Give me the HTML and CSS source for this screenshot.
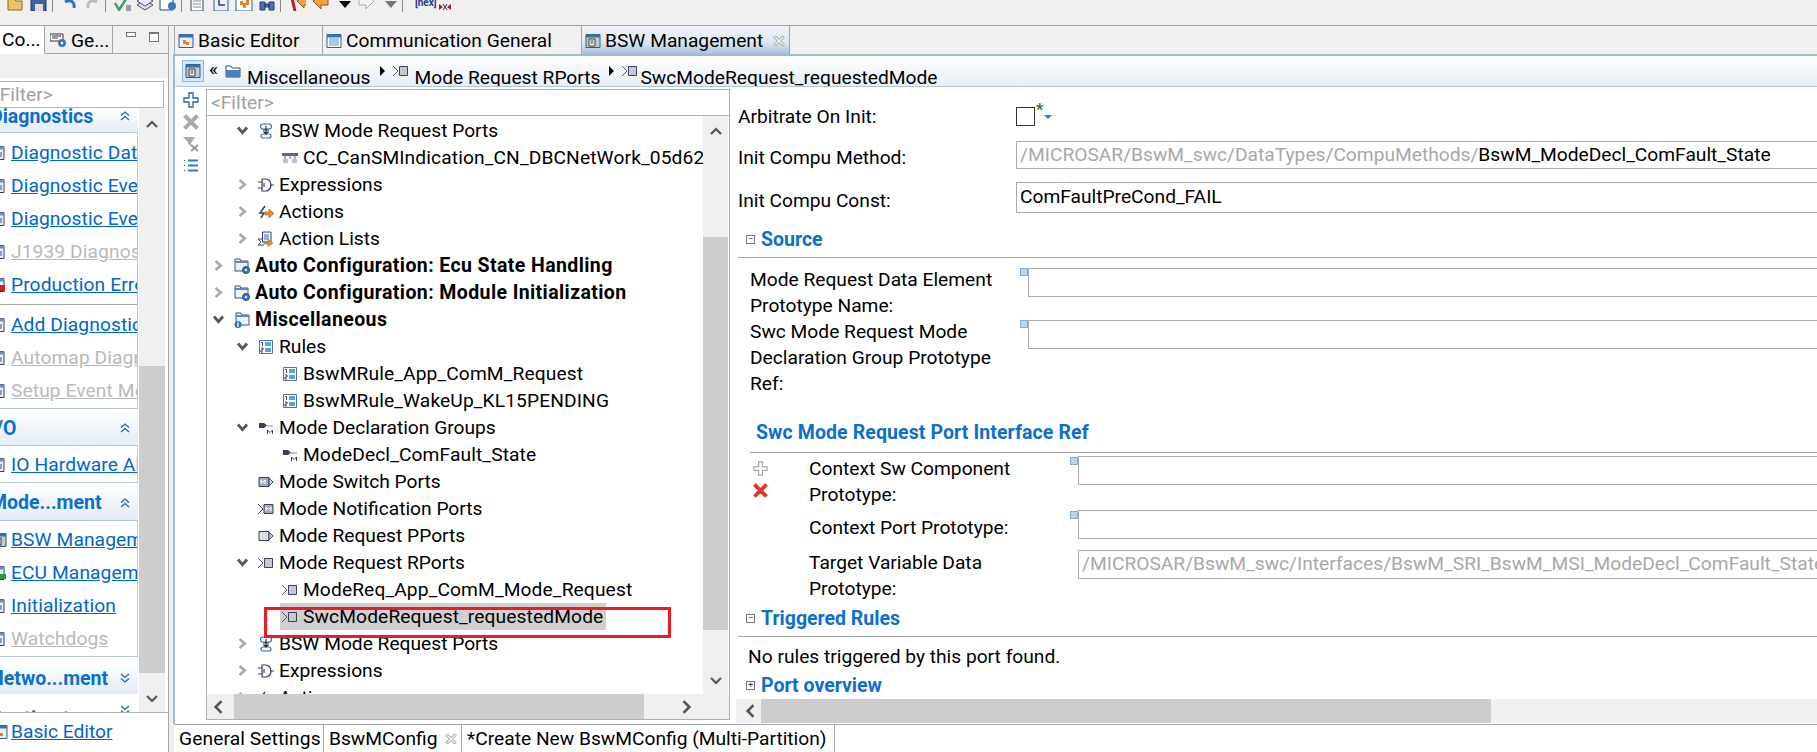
FILE: index.html
```html
<!DOCTYPE html>
<html lang="en">
<head>
  <meta charset="UTF-8" />
  <title>BSW Management</title>
  <link rel="stylesheet" href="styles.css">
</head>
<body>
  <svg class="defs" width="0" height="0">
    <symbol id="i-port" viewBox="0 0 16 16"><path d="M5 1h6a2 2 0 0 1 0 5H5a2 2 0 0 1 0-5zM5 11h6a2 2 0 0 1 0 4H5a2 2 0 0 1 0-4z" fill="#fff" stroke="#3d6ea8" stroke-width="1.2"/><path d="M8 3v8M5.500 8.500 8 11l2.500-2.500M5 7h6" fill="none" stroke="#223" stroke-width="1.100"/></symbol>
    <symbol id="i-cc" viewBox="0 0 16 16"><path d="M0 3h16v3H0z" fill="#5a6a86"/><path d="M3 6v3M13 6v3M8 6v3" stroke="#5a6a86" stroke-width="1"/><path d="M1 9h5v4H1zM10 9h5v4h-5z" fill="#b9c2d2"/></symbol>
    <symbol id="i-expr" viewBox="0 0 16 16"><path d="M4 2h4a5 6 0 0 1 0 12H4z" fill="#fff" stroke="#3b3b66" stroke-width="1.200"/><path d="M0 5h4M0 11h4M12 8h4M6 6v4" stroke="#3b3b66" stroke-width="1.200"/></symbol>
    <symbol id="i-action" viewBox="0 0 16 16"><path d="M7 2 2 9h4l-3 5" fill="none" stroke="#35406e" stroke-width="1.500"/><path d="M7 8h4V5l5 4.500L11 14v-3H7z" fill="#e8912b" stroke="#9b5a10" stroke-width=".6"/></symbol>
    <symbol id="i-list" viewBox="0 0 16 16"><path d="M4.500 1H13v10H4.500z" fill="#eef3fb" stroke="#33406e"/><path d="M6 4h5M6 6h5M6 8h5" stroke="#3a6cb0"/><path d="M4 8H0l3 3-3 3h6" fill="none" stroke="#35406e"/><path d="M6 11h4V8.500l5 3.500-5 3.500V13H6z" fill="#e8912b" stroke="#9b5a10" stroke-width=".5"/></symbol>
    <symbol id="i-cfg" viewBox="0 0 16 16"><path d="M1 1h5l1 2h7v10H1z" fill="#eef3fb" stroke="#36517f"/><path d="M1 3h13v2H1z" fill="#5e89bd"/><circle cx="12" cy="12" r="3.500" fill="#3d7cc4" stroke="#1f4a80"/><circle cx="12" cy="12" r="1.100" fill="#fff"/></symbol>
    <symbol id="i-misc" viewBox="0 0 16 16"><path d="M2 1h5l1 2h7v10H2z" fill="#eef3fb" stroke="#36517f"/><path d="M2 3h13v2H2z" fill="#5e89bd"/><circle cx="4" cy="12.500" r="3.500" fill="#1c78d2"/><path d="M4 11v4" stroke="#fff" stroke-width="1.300"/><path d="M3.300 10h1.400" stroke="#fff"/></symbol>
    <symbol id="i-rule" viewBox="0 0 16 16"><path d="M1.500 1.500h13v13h-13z" fill="#fff" stroke="#5b6f96"/><path d="M7 3h6v4H7zM7 9h6v4H7z" fill="#4fa3e6"/><path d="M3 3.500h1.500V7M3 9h2v2H3v2h2" fill="none" stroke="#33406e"/></symbol>
    <symbol id="i-mgroup" viewBox="0 0 16 16"><path d="M1 3h5l3 2.500L6 8H1z" fill="#3b3b66"/><path d="M9 6h6" stroke="#888"/><path d="M9.500 14V10l2.500 2.500L14.500 10v4" fill="none" stroke="#33406e" stroke-width="1"/></symbol>
    <symbol id="i-mswitch" viewBox="0 0 16 16"><path d="M1 3.500h10v9H1z" fill="#aab" stroke="#33406e"/><path d="M3 10V6l2 2.500L7 6v4" fill="none" stroke="#fff"/><path d="M11 4l4 4-4 4z" fill="#ddd" stroke="#33406e"/></symbol>
    <symbol id="i-mnotify" viewBox="0 0 16 16"><path d="M0 3l5 5-5 5" fill="none" stroke="#33406e"/><path d="M6 3.500h9v9H6z" fill="#aab" stroke="#33406e"/><path d="M8 10V6l2.500 2.500L13 6v4" fill="none" stroke="#fff"/></symbol>
    <symbol id="i-pport" viewBox="0 0 16 16"><path d="M1 3.500h10v9H1z" fill="#ddd" stroke="#33406e"/><path d="M11 4l4 4-4 4z" fill="#ccc" stroke="#33406e"/></symbol>
    <symbol id="i-rport" viewBox="0 0 16 16"><path d="M0 3l5 5-5 5" fill="none" stroke="#4a5680"/><path d="M6.500 3.500h8v9h-8z" fill="#c9c9c9" stroke="#33406e"/></symbol>
    <symbol id="i-folder" viewBox="0 0 16 16"><path d="M1 3h5l1 2h8v9H1z" fill="#fff" stroke="#2c4f86"/><path d="M1 7h14v7H1z" fill="#4a7fc0"/></symbol>
    <symbol id="i-editor" viewBox="0 0 16 16"><path d="M1 1.500h14v13H1z" fill="#eaf0f9" stroke="#2f5d9b"/><path d="M1 1.500h14v3H1z" fill="#3a70b5"/><path d="M5 7h3v2h3v3H8v-1H5z" fill="#e8801e"/></symbol>
    <symbol id="i-comm" viewBox="0 0 16 16"><path d="M1 1.500h14v13H1z" fill="#fff" stroke="#2f5d9b"/><path d="M1 1.500h14v3H1z" fill="#3a70b5"/><path d="M3 6h10M3 8h10M3 10h10M3 12h10" stroke="#5b8fd0"/></symbol>
    <symbol id="i-bsw" viewBox="0 0 16 16"><path d="M1 1.500h14v13H1z" fill="#b9d3c9" stroke="#2f5d8b"/><path d="M1 1.500h14v3H1z" fill="#3a70a5"/><path d="M4 6h6v7H4z" fill="#fff" stroke="#334"/><path d="M5.500 8h3M5.500 10h3" stroke="#334"/></symbol>
    <symbol id="i-gen" viewBox="0 0 16 16"><path d="M0 2h13v7H0z" fill="#fff" stroke="#333"/><path d="M2 4h9M2 6h6" stroke="#333"/><circle cx="12" cy="11" r="4" fill="#3a78bd"/><circle cx="12" cy="11" r="1.300" fill="#fff"/></symbol>
    <symbol id="i-plus" viewBox="0 0 16 16"><path d="M6 1h4v5h5v4h-5v5H6v-5H1V6h5z" fill="#fff" stroke="currentColor" stroke-width="1.300"/></symbol>
    <symbol id="i-cross" viewBox="0 0 16 16"><path d="M3 1l5 5 5-5 2 2-5 5 5 5-2 2-5-5-5 5-2-2 5-5-5-5z" fill="currentColor" stroke="currentColor" stroke-width="1.200"/></symbol>
    <symbol id="i-close" viewBox="0 0 12 12"><path d="M2.500 1 6 4.500 9.500 1 11 2.500 7.500 6 11 9.500 9.500 11 6 7.500 2.500 11 1 9.500 4.500 6 1 2.500z" fill="#fff" stroke="#8a8a8a"/></symbol>
    <symbol id="i-filter" viewBox="0 0 16 16"><path d="M0 1h12L8 7v3L5 8V6z" fill="#aaa"/><path d="M8 9l7 6M15 9l-7 6" stroke="#999" stroke-width="2"/></symbol>
    <symbol id="i-bullets" viewBox="0 0 16 16"><path d="M5 2.500h10M5 7.500h10M5 12.500h10" stroke="#2b7cd3" stroke-width="2"/><path d="M1 2.500h2M1 7.500h2M1 12.500h2" stroke="#2b5a9a" stroke-dasharray="1 1"/></symbol>
    <symbol id="i-page" viewBox="0 0 16 16"><path d="M3 1.500h10v13H3z" fill="#e9eef7" stroke="#34406a"/><path d="M3 1.500h10v3H3z" fill="#6e8dbb"/><path d="M5 7h6v5H5z" fill="#8ea0bd"/></symbol>
    <symbol id="i-page-r" viewBox="0 0 16 16"><path d="M3 1.500h10v13H3z" fill="#e9eef7" stroke="#34406a"/><path d="M3 1.500h10v3H3z" fill="#6e8dbb"/><path d="M2 8h12v6H2z" fill="#c22"/></symbol>
    <symbol id="i-page-g" viewBox="0 0 16 16"><path d="M3 1.500h10v13H3z" fill="#e9eef7" stroke="#34406a"/><path d="M3 1.500h10v3H3z" fill="#6e8dbb"/><path d="M2 9h13v5H2z" fill="#2c9a3c"/></symbol>
    <symbol id="i-up2" viewBox="0 0 10 10"><path d="M1 4.500 5 1l4 3.500M1 9l4-3.500L9 9" fill="none" stroke="#1a66b8" stroke-width="1.300"/></symbol>
    <symbol id="i-down2" viewBox="0 0 10 10"><path d="M1 1l4 3.500L9 1M1 5.500 5 9l4-3.500" fill="none" stroke="#1a66b8" stroke-width="1.300"/></symbol>
    <symbol id="i-up" viewBox="0 0 12 8"><path d="M1 7l5-5 5 5" fill="none" stroke="#555" stroke-width="2.200"/></symbol>
    <symbol id="i-down" viewBox="0 0 12 8"><path d="M1 1l5 5 5-5" fill="none" stroke="#555" stroke-width="2.200"/></symbol>
    <symbol id="i-left" viewBox="0 0 8 12"><path d="M7 1 2 6l5 5" fill="none" stroke="#555" stroke-width="2.200"/></symbol>
    <symbol id="i-right" viewBox="0 0 8 12"><path d="M1 1l5 5-5 5" fill="none" stroke="#555" stroke-width="2.200"/></symbol>
    <symbol id="i-open" viewBox="0 0 10 10"><path d="M2 3 5 6.500 8 3" fill="none" stroke="#555" stroke-width="1.800"/></symbol>
    <symbol id="i-closed" viewBox="0 0 10 10"><path d="M3 2l3.500 3L3 8" fill="none" stroke="#aaa" stroke-width="1.800"/></symbol>
    <symbol id="i-marker" viewBox="0 0 8 8"><path d="M.5.500h7v7h-7z" fill="#bcd6f2" stroke="#2b6cb5" stroke-dasharray="1 1"/></symbol>
  </svg>

  <div class="toolbar">
    <span class="tb-btn"><svg><path d="M1 6h6l2 2h6v9H1z" fill="#e9c46a" stroke="#8a6d1f"/></svg></span>
    <span class="tb-btn"><svg><path d="M1 1h15v17H1z" fill="#3f5fa8" stroke="#23376b"/><path d="M5 11h8v7H5z" fill="#ddd"/></svg></span>
    <span class="tb-sep"></span>
    <span class="tb-btn"><svg><path d="M5 9c6-3 10 0 9 6" fill="none" stroke="#2d6fc0" stroke-width="3"/></svg></span>
    <span class="tb-btn"><svg><path d="M14 9c-6-3-10 0-9 6" fill="none" stroke="#bbb" stroke-width="3"/></svg></span>
    <span class="tb-sep"></span>
    <span class="tb-btn"><svg><path d="M2 10l4 7 9-14" fill="none" stroke="#3d9a6a" stroke-width="2.500"/><path d="M13 12h5v6h-5z" fill="#99a"/></svg></span>
    <span class="tb-btn"><svg><path d="M1 12l8-5 8 5-8 5z" fill="#dde" stroke="#456"/><path d="M1 8l8-5 8 5-8 5z" fill="#eef" stroke="#456"/></svg></span>
    <span class="tb-btn"><svg><path d="M1 5h13v12H1z" fill="#fff" stroke="#1f4a90"/><circle cx="13" cy="13" r="4" fill="#3a78bd"/></svg></span>
    <span class="tb-sep"></span>
    <span class="tb-btn"><svg><path d="M2 5h12v13H2z" fill="#fff" stroke="#345"/><path d="M4 8h8M4 11h8M4 14h8" stroke="#789"/><path d="M11 0h7v6h-7z" fill="#e8a02b"/></svg></span>
    <span class="tb-btn"><svg><path d="M2 2h14v16H2z" fill="#eef" stroke="#2f5d9b"/><path d="M13 6H7v6h6" fill="none" stroke="#345" stroke-width="1.500"/></svg></span>
    <span class="tb-btn"><svg><path d="M1 2h16v16H1z" fill="#fff" stroke="#2f5d9b"/><path d="M5 8h3v2h3V7h3v5h-3v3H8v-3H5z" fill="#e8801e"/></svg></span>
    <span class="tb-btn"><svg><path d="M2 9h5v8H2zM11 9h5v8h-5zM7 11h4v3H7z" fill="#4a74b0" stroke="#223b66"/></svg></span>
    <span class="tb-sep"></span>
    <span class="tb-btn"><svg><path d="M3 1l4 17" stroke="#b22" stroke-width="3"/><path d="M9 8l7-5v3h3v6h-3v3z" fill="#f2a33c" stroke="#9b5a10"/></svg></span>
    <span class="tb-btn"><svg><path d="M2 8l8-6v4h7v6h-7v4z" fill="#f2a33c" stroke="#9b5a10"/></svg></span>
    <span class="tb-btn"><svg><path d="M5 8h12l-6 7z" fill="#000"/></svg></span>
    <span class="tb-btn"><svg><path d="M17 8 9 2v4H2v6h7v4z" fill="#f4f4f4" stroke="#aaa"/></svg></span>
    <span class="tb-btn"><svg><path d="M5 8h12l-6 7z" fill="#777"/></svg></span>
    <span class="tb-sep"></span>
    <span class="tb-hex">[hex]</span>
    <span class="tb-btn"><svg><path d="M3 11l4 3-4 3zM15 11l-4 3 4 3z" fill="#a01c3c"/><path d="M7 11l4 6M11 11l-4 6" stroke="#333"/><path d="M3 5h12" stroke="#888" stroke-dasharray="2 1"/></svg></span>
  </div>

  <div class="workbench">
    <aside class="side">
      <div class="side-tabs">
        <span class="side-tab active">Co...</span>
        <span class="side-tab"><svg class="ico"><use href="#i-gen"/></svg>Ge...</span>
        <span class="side-ctrl">
          <span class="ctrl-min"></span>
          <span class="ctrl-max"></span>
        </span>
      </div>
      <div class="side-band"></div>
      <div class="side-body">
        <div class="side-filter">&lt;Filter&gt;</div>
        <div class="side-scroll">
          <div class="sections">
            <div class="sec-head sec-first"><span>Diagnostics</span><svg class="sec-toggle"><use href="#i-up2"/></svg></div>
            <div class="sec-body sec-main">
              <div class="link-row"><svg class="ico"><use href="#i-page"/></svg><a>Diagnostic Data Identifiers</a></div>
              <div class="link-row"><svg class="ico"><use href="#i-page"/></svg><a>Diagnostic Event Data</a></div>
              <div class="link-row"><svg class="ico"><use href="#i-page"/></svg><a>Diagnostic Event Memory</a></div>
              <div class="link-row off"><svg class="ico"><use href="#i-page"/></svg><a>J1939 Diagnostics</a></div>
              <div class="link-row"><svg class="ico"><use href="#i-page-r"/></svg><a>Production Errors</a></div>
              <div class="sec-sep"></div>
              <div class="link-row"><svg class="ico"><use href="#i-page"/></svg><a>Add Diagnostic Events</a></div>
              <div class="link-row off"><svg class="ico"><use href="#i-page"/></svg><a>Automap Diagnostics</a></div>
              <div class="link-row off"><svg class="ico"><use href="#i-page"/></svg><a>Setup Event Memory</a></div>
            </div>
            <div class="sec-head sec-io"><span>I/O</span><svg class="sec-toggle"><use href="#i-up2"/></svg></div>
            <div class="sec-body sec-tight">
              <div class="link-row"><svg class="ico"><use href="#i-page"/></svg><a>IO Hardware Abstraction</a></div>
            </div>
            <div class="sec-head sec-mode"><span>Mode...ment</span><svg class="sec-toggle"><use href="#i-up2"/></svg></div>
            <div class="sec-body sec-modes">
              <div class="link-row"><svg class="ico"><use href="#i-bsw"/></svg><a>BSW Management</a></div>
              <div class="link-row"><svg class="ico"><use href="#i-page-g"/></svg><a>ECU Management</a></div>
              <div class="link-row"><svg class="ico"><use href="#i-page"/></svg><a>Initialization</a></div>
              <div class="link-row off"><svg class="ico"><use href="#i-page"/></svg><a>Watchdogs</a></div>
            </div>
            <div class="sec-head sec-closed"><span>Netwo...ment</span><svg class="sec-toggle"><use href="#i-down2"/></svg></div>
            <div class="sec-head sec-closed sec-last"><span>Runti...stem</span><svg class="sec-toggle"><use href="#i-down2"/></svg></div>
          </div>
          <div class="vbar side-vbar">
            <svg class="bar-arrow"><use href="#i-up"/></svg>
            <div class="bar-gap"></div>
            <div class="bar-thumb"></div>
            <div class="bar-gap-end"></div>
            <svg class="bar-arrow"><use href="#i-down"/></svg>
          </div>
        </div>
        <div class="side-foot"><svg class="ico"><use href="#i-editor"/></svg><a>Basic Editor</a></div>
      </div>
    </aside>

    <main class="editor">
      <div class="ed-tabs">
        <span class="ed-tab tab-basic"><svg class="ico"><use href="#i-editor"/></svg>Basic Editor</span>
        <span class="ed-tab tab-comm"><svg class="ico"><use href="#i-comm"/></svg>Communication General</span>
        <span class="ed-tab tab-bsw"><svg class="ico"><use href="#i-bsw"/></svg>BSW Management<svg class="tab-x"><use href="#i-close"/></svg></span>
      </div>
      <div class="page">
        <div class="crumbs">
          <span class="crumb-toggle"><svg class="ico"><use href="#i-bsw"/></svg></span>
          <span class="crumb-back">«</span>
          <svg class="ico"><use href="#i-folder"/></svg>
          <span class="crumb">Miscellaneous</span>
          <span class="crumb-arrow"></span>
          <svg class="ico"><use href="#i-rport"/></svg>
          <span class="crumb">Mode Request RPorts</span>
          <span class="crumb-arrow"></span>
          <svg class="ico"><use href="#i-rport"/></svg>
          <span class="crumb crumb-last">SwcModeRequest_requestedMode</span>
        </div>
        <div class="page-body">
          <div class="gutter">
            <svg class="gut-ico plus"><use href="#i-plus"/></svg>
            <svg class="gut-ico cross"><use href="#i-cross"/></svg>
            <svg class="gut-ico"><use href="#i-filter"/></svg>
            <svg class="gut-ico"><use href="#i-bullets"/></svg>
          </div>

          <section class="tree-pane">
            <div class="tree-filter">&lt;Filter&gt;</div>
            <div class="tree-main">
              <div class="tree">
                <div class="row l1"><svg class="twist"><use href="#i-open"/></svg><span class="lbl"><svg class="ico"><use href="#i-port"/></svg>BSW Mode Request Ports</span></div>
                <div class="row l2"><span class="lbl"><svg class="ico"><use href="#i-cc"/></svg>CC_CanSMIndication_CN_DBCNetWork_05d62e6c_Rx</span></div>
                <div class="row l1"><svg class="twist"><use href="#i-closed"/></svg><span class="lbl"><svg class="ico"><use href="#i-expr"/></svg>Expressions</span></div>
                <div class="row l1"><svg class="twist"><use href="#i-closed"/></svg><span class="lbl"><svg class="ico"><use href="#i-action"/></svg>Actions</span></div>
                <div class="row l1"><svg class="twist"><use href="#i-closed"/></svg><span class="lbl"><svg class="ico"><use href="#i-list"/></svg>Action Lists</span></div>
                <div class="row l0 strong"><svg class="twist"><use href="#i-closed"/></svg><span class="lbl"><svg class="ico"><use href="#i-cfg"/></svg>Auto Configuration: Ecu State Handling</span></div>
                <div class="row l0 strong"><svg class="twist"><use href="#i-closed"/></svg><span class="lbl"><svg class="ico"><use href="#i-cfg"/></svg>Auto Configuration: Module Initialization</span></div>
                <div class="row l0 strong"><svg class="twist"><use href="#i-open"/></svg><span class="lbl"><svg class="ico"><use href="#i-misc"/></svg>Miscellaneous</span></div>
                <div class="row l1"><svg class="twist"><use href="#i-open"/></svg><span class="lbl"><svg class="ico"><use href="#i-rule"/></svg>Rules</span></div>
                <div class="row l2"><span class="lbl"><svg class="ico"><use href="#i-rule"/></svg>BswMRule_App_ComM_Request</span></div>
                <div class="row l2"><span class="lbl"><svg class="ico"><use href="#i-rule"/></svg>BswMRule_WakeUp_KL15PENDING</span></div>
                <div class="row l1"><svg class="twist"><use href="#i-open"/></svg><span class="lbl"><svg class="ico"><use href="#i-mgroup"/></svg>Mode Declaration Groups</span></div>
                <div class="row l2"><span class="lbl"><svg class="ico"><use href="#i-mgroup"/></svg>ModeDecl_ComFault_State</span></div>
                <div class="row l1 leaf"><span class="lbl"><svg class="ico"><use href="#i-mswitch"/></svg>Mode Switch Ports</span></div>
                <div class="row l1 leaf"><span class="lbl"><svg class="ico"><use href="#i-mnotify"/></svg>Mode Notification Ports</span></div>
                <div class="row l1 leaf"><span class="lbl"><svg class="ico"><use href="#i-pport"/></svg>Mode Request PPorts</span></div>
                <div class="row l1"><svg class="twist"><use href="#i-open"/></svg><span class="lbl"><svg class="ico"><use href="#i-rport"/></svg>Mode Request RPorts</span></div>
                <div class="row l2"><span class="lbl"><svg class="ico"><use href="#i-rport"/></svg>ModeReq_App_ComM_Mode_Request</span></div>
                <div class="row l2"><span class="lbl sel"><svg class="ico"><use href="#i-rport"/></svg>SwcModeRequest_requestedMode</span></div>
                <div class="row l1"><svg class="twist"><use href="#i-closed"/></svg><span class="lbl"><svg class="ico"><use href="#i-port"/></svg>BSW Mode Request Ports</span></div>
                <div class="row l1"><svg class="twist"><use href="#i-closed"/></svg><span class="lbl"><svg class="ico"><use href="#i-expr"/></svg>Expressions</span></div>
                <div class="row l1"><svg class="twist"><use href="#i-closed"/></svg><span class="lbl"><svg class="ico"><use href="#i-action"/></svg>Actions</span></div>
              </div>
              <div class="vbar tree-vbar">
                <svg class="bar-arrow"><use href="#i-up"/></svg>
                <div class="bar-gap"></div>
                <div class="bar-thumb"></div>
                <div class="bar-gap-end"></div>
                <svg class="bar-arrow"><use href="#i-down"/></svg>
              </div>
            </div>
            <div class="hbar tree-hbar">
              <svg class="bar-arrow-h"><use href="#i-left"/></svg>
              <div class="hbar-thumb"></div>
              <svg class="bar-arrow-h"><use href="#i-right"/></svg>
            </div>
          </section>

          <section class="form">
            <div class="form-scroll">
              <div class="f-row f-check">
                <label class="f-label">Arbitrate On Init:</label>
                <span class="check"></span><span class="star">*</span><span class="drop"></span>
              </div>
              <div class="f-row f-method">
                <label class="f-label">Init Compu Method:</label>
                <div class="input off">/MICROSAR/BswM_swc/DataTypes/CompuMethods/<b>BswM_ModeDecl_ComFault_State</b></div>
              </div>
              <div class="f-row f-const">
                <label class="f-label">Init Compu Const:</label>
                <div class="input">ComFaultPreCond_FAIL</div>
              </div>

              <h3 class="sec-title top"><span class="box">−</span>Source</h3>
              <div class="src-rows">
                <div class="s-row">
                  <label class="s-label">Mode Request Data Element Prototype Name:</label>
                  <svg class="marker"><use href="#i-marker"/></svg>
                  <div class="input"></div>
                </div>
                <div class="s-row s-tall">
                  <label class="s-label">Swc Mode Request Mode Declaration Group Prototype Ref:</label>
                  <svg class="marker"><use href="#i-marker"/></svg>
                  <div class="input"></div>
                </div>
              </div>

              <h4 class="sub-title">Swc Mode Request Port Interface Ref</h4>
              <div class="ref-block">
                <div class="ref-tools">
                  <svg class="ref-ico plus-off"><use href="#i-plus"/></svg>
                  <svg class="ref-ico cross-red"><use href="#i-cross"/></svg>
                </div>
                <div class="ref-rows">
                  <div class="r-row r-a">
                    <label class="r-label">Context Sw Component Prototype:</label>
                    <svg class="marker"><use href="#i-marker"/></svg>
                    <div class="input"></div>
                  </div>
                  <div class="r-row r-b">
                    <label class="r-label">Context Port Prototype:</label>
                    <svg class="marker"><use href="#i-marker"/></svg>
                    <div class="input"></div>
                  </div>
                  <div class="r-row r-c">
                    <label class="r-label">Target Variable Data Prototype:</label>
                    <span class="marker"></span>
                    <div class="input off">/MICROSAR/BswM_swc/Interfaces/BswM_SRI_BswM_MSI_ModeDecl_ComFault_State_BswM_MDG</div>
                  </div>
                </div>
              </div>

              <h3 class="sec-title trig"><span class="box">−</span>Triggered Rules</h3>
              <p class="no-rules">No rules triggered by this port found.</p>
              <h3 class="sec-title plain"><span class="box">+</span>Port overview</h3>
            </div>
            <div class="hbar form-hbar">
              <svg class="bar-arrow-h"><use href="#i-left"/></svg>
              <div class="hbar-thumb"></div>
            </div>
          </section>
        </div>
      </div>
      <div class="page-tabs">
        <span class="page-tab tab-general">General Settings</span>
        <span class="page-tab tab-config">BswMConfig<svg class="tab-x"><use href="#i-close"/></svg></span>
        <span class="page-tab tab-create">*Create New BswMConfig (Multi-Partition)</span>
      </div>
    </main>
  </div>

  <div class="callout"></div>
</body>
</html>
```

FILE: styles.css
```css
* {
  box-sizing: border-box;
}

html, body {
  height: 100%;
}

body {
  margin: 0;
  width: 1817px;
  height: 752px;
  overflow: hidden;
  background: #f0f0f0;
  color: #000;
  font-family: Roboto, "Noto Sans", sans-serif;
  font-size: 19.2px;
  line-height: 27px;
  display: flex;
  flex-direction: column;
  position: relative;
}

.defs {
  position: absolute;
}

.ico {
  width: 16px;
  height: 16px;
  flex: none;
}

/* toolbar, icons are cut off by the top of the shot */
.toolbar {
  height: 25px;
  flex: none;
  display: flex;
  align-items: flex-start;
  padding-left: 4px;
  overflow: hidden;
}

.tb-btn {
  width: 23px;
  height: 11px;
  flex: none;
  overflow: hidden;
  display: flex;
  justify-content: center;
  align-items: flex-end;
}

.tb-btn svg {
  width: 18px;
  height: 18px;
  flex: none;
}

.tb-sep {
  width: 1px;
  height: 12px;
  margin: 0 4px 0 2px;
  background: #888;
  flex: none;
}

.tb-hex {
  width: 18px;
  height: 11px;
  margin-left: 8px;
  font-size: 10px;
  font-weight: 700;
  line-height: 14px;
  margin-top: -4px;
  color: #1c3f86;
  flex: none;
}

.workbench {
  flex: 1;
  display: flex;
  min-height: 0;
  border-top: 1px solid #a6a6a6;
}

/* left view */
.side {
  width: 169px;
  flex: none;
  display: flex;
  flex-direction: column;
  border-right: 1px solid #a6a6a6;
  margin-right: 5px;
}

.side-tabs {
  height: 28px;
  flex: none;
  display: flex;
  border-bottom: 1px solid #a6a6a6;
}

.side-tab {
  display: flex;
  align-items: center;
  gap: 5px;
  width: 68px;
  padding-left: 5px;
  border-right: 1px solid #a6a6a6;
  margin-bottom: -1px;
}

.side-tab.active {
  width: 45px;
  padding-left: 2px;
  background: #fff;
  border-bottom: 1px solid #fff;
}

.side-ctrl {
  flex: 1;
  display: flex;
  gap: 13px;
  padding: 6px 0 0 13px;
  align-items: flex-start;
}

.ctrl-min {
  width: 10px;
  height: 5px;
  border: 1px solid #777;
  background: #fff;
}

.ctrl-max {
  width: 10px;
  height: 10px;
  border: 1px solid #777;
  border-top-width: 2px;
  background: #fff;
}

.side-band {
  height: 24px;
  flex: none;
}

.side-body {
  flex: 1;
  min-height: 0;
  background: #fff;
  display: flex;
  flex-direction: column;
}

.side-filter {
  height: 27px;
  margin: 3px 4px 0 -1px;
  flex: none;
  border: 1px solid #b4b4b4;
  color: #a0a0a0;
  line-height: 25px;
  text-indent: -10px;
  overflow: hidden;
}

.side-scroll {
  flex: 1;
  min-height: 0;
  display: flex;
}

.sections {
  width: 139px;
  flex: none;
  overflow: hidden;
}

.sec-head {
  display: flex;
  justify-content: space-between;
  align-items: center;
  height: 24px;
  width: 138px;
  padding: 0 8px 0 0;
  background: linear-gradient(#fff, #e4ecf5);
  color: #0b6fcf;
  font-size: 19.5px;
  font-weight: 700;
  white-space: nowrap;
}

.sec-head span {
  margin-left: -10px;
}

.sec-first span, .sec-first .sec-toggle {
  margin-top: -8px;
}

.sec-io {
  height: 36px;
  padding-top: 2px;
}

.sec-mode {
  height: 37px;
  padding-top: 2px;
}

.sec-closed {
  height: 32px;
  margin-top: 5px;
}

.sec-last {
  margin-top: 6px;
  height: 30px;
  background: #fff;
  align-items: flex-start;
  padding-top: 5px;
}

.sec-toggle {
  width: 10px;
  height: 10px;
  flex: none;
}

.sec-body {
  width: 138px;
  background: #fff;
  border: 1px solid #b8c8dc;
  border-left: 0;
  overflow: hidden;
}

.sec-main {
  padding: 3px 0 1px;
}

.sec-tight {
  padding: 2px 0 1px;
}

.sec-modes {
  padding: 2px 0 1px;
}

.sec-sep {
  height: 1px;
  margin: 3px 0;
  background: #a8a8a8;
}

.link-row {
  display: flex;
  align-items: center;
  height: 33px;
  gap: 4px;
  letter-spacing: .1px;
  white-space: nowrap;
  margin-left: -9px;
}

.link-row a, .side-foot a {
  color: #0066cc;
  text-decoration: underline;
}

.link-row.off a {
  color: #b9b9b9;
}

.side-foot {
  height: 40px;
  flex: none;
  display: flex;
  align-items: center;
  gap: 3px;
  margin-left: -8px;
  border-top: 1px solid #b0b0b0;
  padding-bottom: 2px;
}

/* scrollbars */
.vbar {
  flex: none;
  background: #f0f0f0;
  display: flex;
  flex-direction: column;
  align-items: center;
}

.side-vbar {
  width: 26px;
  padding: 12px 0 9px;
}

.side-vbar .bar-gap {
  height: 238px;
}

.side-vbar .bar-thumb {
  height: 307px;
}

.tree-vbar {
  width: 25px;
  margin-right: 1px;
  padding: 11px 0 9px;
}

.tree-vbar .bar-gap {
  height: 102px;
}

.tree-vbar .bar-thumb {
  height: 393px;
}

.bar-arrow {
  width: 12px;
  height: 8px;
  flex: none;
}

.bar-thumb {
  width: 100%;
  background: #cdcdcd;
  flex: none;
}

.bar-gap-end {
  flex: 1;
}

.hbar {
  display: flex;
  align-items: center;
  background: #f0f0f0;
  flex: none;
}

.bar-arrow-h {
  width: 10px;
  height: 14px;
  flex: none;
}

.hbar-thumb {
  height: 100%;
  background: #cdcdcd;
}

/* editor */
.editor {
  flex: 1;
  min-width: 0;
  display: flex;
  flex-direction: column;
}

.ed-tabs {
  height: 28px;
  flex: none;
  display: flex;
}

.ed-tab {
  display: flex;
  align-items: center;
  gap: 4px;
  border-right: 1px solid #a6a6a6;
  padding: 1px 0 0 3px;
  white-space: nowrap;
}

.tab-basic {
  width: 149px;
  border-left: 1px solid #a6a6a6;
}

.tab-comm {
  width: 259px;
}

.tab-bsw {
  width: 208px;
  padding-left: 3px;
  background: linear-gradient(#f2f5f9, #dde6f0 60%, #a9c0da);
}

.tab-x {
  width: 12px;
  height: 12px;
  margin-left: 6px;
  flex: none;
}

.page {
  flex: 1;
  min-height: 0;
  display: flex;
  flex-direction: column;
  background: #fff;
  border-top: 2px solid #9dbad6;
  border-left: 2px solid #9dbad6;
  margin-left: -1px;
}

.crumbs {
  height: 31px;
  flex: none;
  display: flex;
  align-items: center;
  padding-left: 7px;
  background: linear-gradient(#fff, #e8eef6);
  border-bottom: 1px solid #b2c6dc;
  overflow: hidden;
  white-space: nowrap;
}

.crumb-toggle {
  width: 22px;
  height: 22px;
  display: flex;
  align-items: center;
  justify-content: center;
  background: #d5e6f8;
  border: 1px solid #8fbce8;
  flex: none;
}

.crumb-back {
  width: 21px;
  padding-left: 5px;
  margin-top: -6px;
  flex: none;
}

.crumb {
  margin-left: 6px;
  margin-top: 13px;
}

.crumb-last {
  margin-left: 2px;
}

.crumb-arrow {
  width: 0;
  height: 0;
  margin: 0 8px 0 9px;
  border: 5px solid transparent;
  border-left: 5px solid #000;
  border-right: 0;
  flex: none;
}

.page-body {
  flex: 1;
  min-height: 0;
  display: flex;
}

.gutter {
  width: 31px;
  flex: none;
  display: flex;
  flex-direction: column;
  align-items: center;
  gap: 6px;
  padding-top: 5px;
  padding-left: 1px;
}

.gut-ico {
  width: 16px;
  height: 16px;
  color: #2d5fa8;
}

.gut-ico.cross {
  color: #aaa;
}

.tree-pane {
  width: 524px;
  flex: none;
  margin: 2px 0 4px;
  border: 1px solid #b0b0b0;
  display: flex;
  flex-direction: column;
}

.tree-filter {
  height: 26px;
  flex: none;
  line-height: 25px;
  padding-left: 4px;
  color: #a0a0a0;
  border-bottom: 1px solid #b0b0b0;
}

.tree-main {
  flex: 1;
  min-height: 0;
  display: flex;
}

.tree {
  flex: 1;
  min-width: 0;
  overflow: hidden;
  padding-top: 1px;
}

.row {
  height: 27px;
  display: flex;
  align-items: center;
  white-space: nowrap;
}

.row.l0 {
  padding-left: 4px;
}

.row.l1 {
  padding-left: 28px;
}

.row.l2 {
  padding-left: 75px;
  letter-spacing: .12px;
}

.row.leaf {
  padding-left: 51px;
}

.row.strong {
  font-size: 19.5px;
  font-weight: 700;
  letter-spacing: .4px;
}

.twist {
  width: 15px;
  height: 15px;
  margin-right: 8px;
  flex: none;
}

.lbl {
  display: flex;
  align-items: center;
  gap: 5px;
  height: 27px;
}

.lbl.sel {
  margin-left: -2px;
  padding: 0 3px 0 2px;
  background: #d0d0d0;
}

.tree-hbar {
  height: 25px;
  padding-left: 6px;
}

.tree-hbar .hbar-thumb {
  width: 410px;
  margin: 0 38px 0 11px;
}

/* form on the right */
.form {
  flex: 1;
  min-width: 0;
  display: flex;
  flex-direction: column;
}

.form-scroll {
  flex: 1;
  min-height: 0;
  overflow: hidden;
  padding: 20px 0 0 8px;
}

.f-row {
  display: flex;
  align-items: center;
}

.f-label {
  width: 278px;
  flex: none;
}

.f-check {
  height: 19px;
}

.f-method {
  margin-top: 15px;
  height: 28px;
}

.f-const {
  margin-top: 13px;
  height: 31px;
}

.f-method .f-label, .f-const .f-label {
  padding-top: 5px;
}

.f-const .input {
  padding-top: 1px;
}

.input {
  flex: 1;
  height: 100%;
  margin-right: -4px;
  border: 1px solid #ababab;
  padding-left: 3px;
  line-height: 25px;
  white-space: nowrap;
  overflow: hidden;
  background: #fff;
}

.input.off {
  color: #a8a8a8;
}

.input b {
  font-weight: 400;
  color: #000;
}

.check {
  width: 19px;
  height: 19px;
  border: 1px solid #333;
  flex: none;
}

.star {
  color: #1c7a1c;
  font-weight: 700;
  font-size: 16px;
  line-height: 10px;
  margin: -14px 0 0 1px;
}

.drop {
  width: 0;
  height: 0;
  margin-left: 1px;
  border: 4px solid transparent;
  border-top: 4px solid #2b7cd3;
  border-bottom: 0;
}

.sec-title {
  margin: 0;
  display: flex;
  align-items: center;
  color: #0b6fcf;
  font-size: 19.5px;
  font-weight: 700;
  height: 26px;
  padding-left: 8px;
}

.sec-title.top {
  margin-top: 13px;
  height: 32px;
  padding-bottom: 5px;
  border-bottom: 1px solid #a8a8a8;
}

.sec-title.trig {
  margin-top: 2px;
  height: 33px;
  padding-bottom: 3px;
  border-bottom: 1px solid #a8a8a8;
}

.sec-title.plain {
  margin-top: 2px;
}

.box {
  width: 9px;
  height: 9px;
  margin-right: 6px;
  border: 1px solid #777;
  font-size: 9px;
  line-height: 6px;
  font-weight: 400;
  color: #333;
  text-align: center;
  flex: none;
}

.src-rows {
  padding: 9px 0 0 12px;
}

.s-row {
  display: flex;
  align-items: flex-start;
  height: 52px;
}

.s-row.s-tall {
  height: 78px;
}

.s-label {
  width: 270px;
  padding-right: 6px;
  line-height: 26px;
  flex: none;
}

.s-row .input {
  height: 29px;
  margin-top: 1px;
  flex: 1;
}

.marker {
  width: 8px;
  height: 8px;
  flex: none;
  margin-top: 1px;
}

.sub-title {
  margin: 23px 0 0 12px;
  height: 33px;
  padding-left: 6px;
  color: #0b6fcf;
  font-size: 19.5px;
  letter-spacing: .1px;
  font-weight: 700;
  line-height: 26px;
  border-bottom: 1px solid #a8a8a8;
}

.ref-block {
  display: flex;
  margin-left: 12px;
  padding-top: 3px;
}

.ref-tools {
  width: 59px;
  flex: none;
  display: flex;
  flex-direction: column;
  align-items: center;
  gap: 7px;
  padding: 5px 38px 0 0;
}

.ref-ico {
  width: 15px;
  height: 15px;
  flex: none;
}

.plus-off {
  color: #aaa;
}

.cross-red {
  color: #d8382a;
}

.ref-rows {
  flex: 1;
  min-width: 0;
}

.r-row {
  display: flex;
  align-items: flex-start;
  height: 54px;
}

.r-row .input {
  height: 29px;
  margin-top: 0;
  flex: 1;
}

.r-label {
  width: 261px;
  padding-right: 40px;
  line-height: 26px;
  flex: none;
}

.r-b {
  height: 40px;
}

.r-b .r-label {
  padding-top: 5px;
}

.r-c {
  height: 52px;
}

.no-rules {
  margin: 7px 0 0 10px;
  line-height: 26px;
}

.form-hbar {
  height: 24px;
  margin: 0 0 1px 6px;
  padding-left: 9px;
}

.form-hbar .hbar-thumb {
  width: 730px;
  margin-left: 6px;
}

.page-tabs {
  height: 28px;
  flex: none;
  display: flex;
  align-items: stretch;
  background: #fff;
  border-top: 1px solid #a8a8a8;
}

.page-tab {
  display: flex;
  align-items: center;
  border-right: 1px solid #a8a8a8;
  white-space: nowrap;
  background: #fff;
}

.tab-general {
  width: 150px;
  padding-left: 5px;
  letter-spacing: .1px;
}

.tab-config {
  width: 138px;
  padding-left: 5px;
}

.tab-create {
  width: 373px;
  padding-left: 5px;
}

.page-tab .tab-x {
  margin-left: 8px;
}

/* the red mark someone drew on the screenshot */
.callout {
  position: absolute;
  left: 264px;
  top: 607px;
  width: 407px;
  height: 31px;
  border: 3px solid #ed1c24;
}
```
